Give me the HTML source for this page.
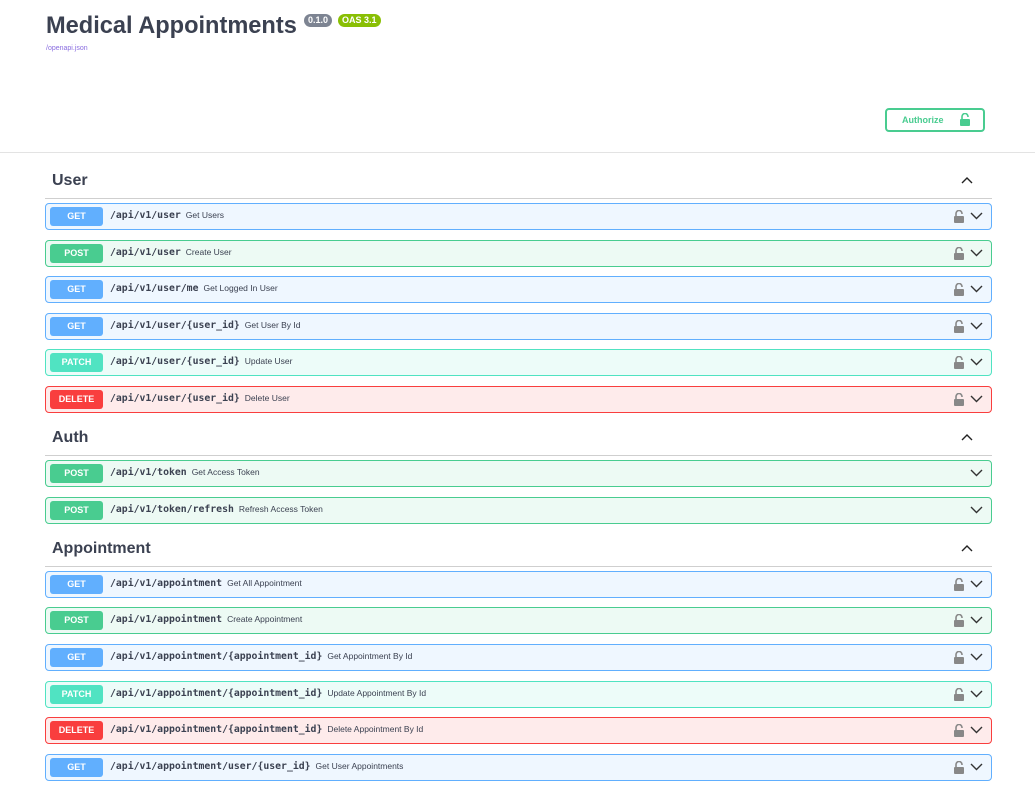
<!DOCTYPE html>
<html><head><meta charset="utf-8"><style>
*{box-sizing:border-box;margin:0;padding:0}
body{width:1035px;height:799px;background:#fff;font-family:"Liberation Sans",sans-serif;position:relative;overflow:hidden;color:#3b4151}
.t{position:absolute;left:46px;top:13px;font-size:23.6px;font-weight:bold;color:#3b4151}
.b{position:absolute;top:14px;height:13px;border-radius:7px;color:#fff;font-size:9px;font-weight:bold;line-height:13px;padding:0 4px}
.lnk{position:absolute;left:46px;top:45px;font-size:7px;color:#8a6de0}
.auth{position:absolute;left:885px;top:108px;width:100px;height:24px;border:2px solid #49cc90;border-radius:4px;color:#49cc90;font-size:9px;font-weight:bold;line-height:20px;padding-left:15px}
.hr{position:absolute;left:0;top:152px;width:1035px;height:1px;background:#e3e3e3}
.h{position:absolute;left:52px;font-size:16px;font-weight:bold;color:#3b4151}
.hl{position:absolute;left:45px;width:947px;height:1px;background:#cfcfcf}
.car{position:absolute;left:961px}
.r{position:absolute;left:45px;width:947px;height:27px;border:1px solid;border-radius:4px}
.m{position:absolute;left:4px;top:3px;width:53px;height:19px;border-radius:3px;color:#fff;font-size:9px;font-weight:bold;text-align:center;line-height:19px}
.p{position:absolute;left:64px;top:6px;font-family:"DejaVu Sans Mono","Liberation Mono",monospace;font-weight:bold;font-size:9.8px;color:#3b4151;white-space:nowrap}
.p span{font-family:"Liberation Sans",sans-serif;font-weight:normal;font-size:8.5px;margin-left:5px}
.lk{position:absolute;left:908px;top:6px}
.ch{position:absolute;left:924px;top:8px}
.GET{background:#eff7ff;border-color:#61affe}.GET .m{background:#61affe}
.POST{background:#edfaf4;border-color:#49cc90}.POST .m{background:#49cc90}
.PATCH{background:#edfcf9;border-color:#50e3c2}.PATCH .m{background:#50e3c2}
.DELETE{background:#feebeb;border-color:#f93e3e}.DELETE .m{background:#f93e3e}
</style></head><body>
<div class="t">Medical Appointments</div>
<div class="b" style="left:304px;background:#7d8492">0.1.0</div>
<div class="b" style="left:338px;background:#89bf04">OAS 3.1</div>
<div class="lnk">/openapi.json</div>
<div class="auth">Authorize<svg style="position:absolute;left:73px;top:3px" width="10" height="13" viewBox="0 0 10 13"><path d="M2 6V3.5a3 3 0 0 1 6 0V4" fill="none" stroke="#49cc90" stroke-width="1.6"/><rect x="0" y="6" width="10" height="7" rx="1" fill="#49cc90"/></svg></div>
<div class="hr"></div>

<div class="h" style="top:172px">User</div><div class="hl" style="top:198px"></div>
<svg class="car" style="top:176px" width="12" height="8"><path d="M1 7l5-5 5 5" fill="none" stroke="#222" stroke-width="1.4"/></svg>
<div class="h" style="top:429px">Auth</div><div class="hl" style="top:455px"></div>
<svg class="car" style="top:433px" width="12" height="8"><path d="M1 7l5-5 5 5" fill="none" stroke="#222" stroke-width="1.4"/></svg>
<div class="h" style="top:540px">Appointment</div><div class="hl" style="top:566px"></div>
<svg class="car" style="top:544px" width="12" height="8"><path d="M1 7l5-5 5 5" fill="none" stroke="#222" stroke-width="1.4"/></svg>

<div id="rows"></div>
<script>
var R=[[203,'GET','/api/v1/user','Get Users',1],[240,'POST','/api/v1/user','Create User',1],[276,'GET','/api/v1/user/me','Get Logged In User',1],[313,'GET','/api/v1/user/{user_id}','Get User By Id',1],[349,'PATCH','/api/v1/user/{user_id}','Update User',1],[386,'DELETE','/api/v1/user/{user_id}','Delete User',1],
[460,'POST','/api/v1/token','Get Access Token',0],[497,'POST','/api/v1/token/refresh','Refresh Access Token',0],
[571,'GET','/api/v1/appointment','Get All Appointment',1],[607,'POST','/api/v1/appointment','Create Appointment',1],[644,'GET','/api/v1/appointment/{appointment_id}','Get Appointment By Id',1],[681,'PATCH','/api/v1/appointment/{appointment_id}','Update Appointment By Id',1],[717,'DELETE','/api/v1/appointment/{appointment_id}','Delete Appointment By Id',1],[754,'GET','/api/v1/appointment/user/{user_id}','Get User Appointments',1]];
var h='';R.forEach(function(r){h+='<div class="r '+r[1]+'" style="top:'+r[0]+'px"><div class="m">'+r[1]+'</div><div class="p">'+r[2]+'<span>'+r[3]+'</span></div>'+(r[4]?'<svg class="lk" width="10" height="13" viewBox="0 0 10 13"><path d="M2 6V3.5a3 3 0 0 1 6 0V4" fill="none" stroke="#888" stroke-width="1.6"/><rect x="0" y="6" width="10" height="7" rx="1" fill="#888"/></svg>':'')+'<svg class="ch" width="13" height="8"><path d="M1 1l5.5 5.5L12 1" fill="none" stroke="#333" stroke-width="1.4"/></svg></div>'});
document.getElementById('rows').innerHTML=h;
</script>
</body></html>
